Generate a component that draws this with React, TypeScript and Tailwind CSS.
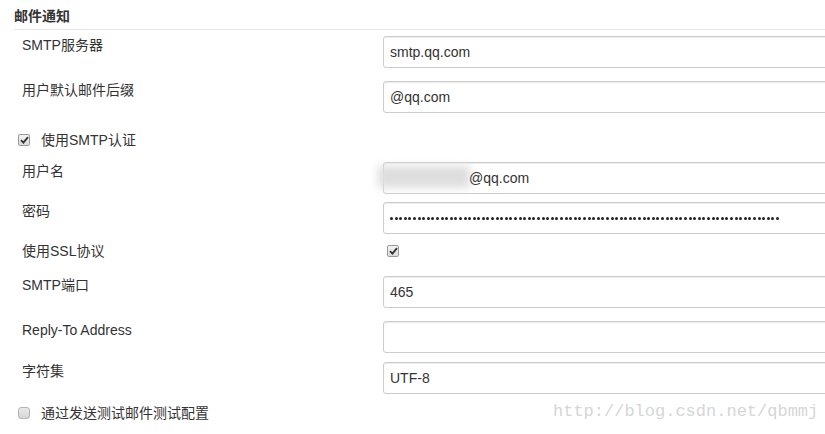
import type { ReactNode } from 'react';

const font = { fontFamily: '"Liberation Sans", Arial, "Noto Sans CJK SC", sans-serif' };

function Field({ children, className = '' }: { children?: ReactNode; className?: string }) {
  return (
    <div
      className={`relative flex h-[32px] w-[460px] shrink-0 items-center rounded-[3px] border border-[#cccccc] bg-white pl-[6px] text-[14px] text-[#333] shadow-[inset_0_1px_1px_rgba(0,0,0,0.075)] ${className}`}
    >
      {children}
    </div>
  );
}

function Row({ label, children, className = '' }: { label: string; children: ReactNode; className?: string }) {
  return (
    <div className={`flex items-start pl-[22px] ${className}`}>
      <div className="w-[361px] shrink-0 text-[14px] leading-[18px] text-[#333]">{label}</div>
      {children}
    </div>
  );
}

function Check({ checked }: { checked?: boolean }) {
  if (!checked) {
    return (
      <span className="block h-[12px] w-[12px] shrink-0 rounded-[3px] border border-[#b5b5b5] bg-gradient-to-b from-[#e9e9e9] to-[#d6d6d6]" />
    );
  }
  return (
    <span className="flex h-[12px] w-[12px] shrink-0 items-center justify-center rounded-[2px] border border-[#9a9a9a] bg-gradient-to-b from-[#f4f4f4] to-[#dcdcdc]">
      <svg width="9" height="8" viewBox="0 0 9 8">
        <path d="M1 4.2 L3.4 6.6 L8 1.2" fill="none" stroke="#333" strokeWidth="1.8" />
      </svg>
    </span>
  );
}

export default function App() {
  const dots = Array.from({ length: 85 });
  return (
    <div className="relative h-[434px] w-full overflow-hidden bg-white" style={font}>
      {/* section header */}
      <div className="ml-[14px] h-[30px] border-b border-[#e5e5e5] pt-[6px] text-[14px] font-bold leading-[20px] text-[#333]">
        邮件通知
      </div>

      <Row label="SMTP服务器" className="mt-[6px]">
        <Field>smtp.qq.com</Field>
      </Row>
      <Row label="用户默认邮件后缀" className="mt-[13px]">
        <Field>@qq.com</Field>
      </Row>

      <div className="mt-[19px] flex h-[16px] items-center pl-[18px] text-[14px] text-[#333]">
        <Check checked />
        <span className="ml-[11px]">使用SMTP认证</span>
      </div>

      <Row label="用户名" className="mt-[14px]">
        <Field className="pl-[85px]">
          <span className="absolute left-[-6px] top-[3px] h-[22px] w-[92px] bg-[#dedede] blur-[4px]" />
          <span className="relative">@qq.com</span>
        </Field>
      </Row>
      <Row label="密码" className="mt-[8px]">
        <Field>
          <div className="flex gap-[1.6px]">
            {dots.map((_, i) => (
              <span key={i} className="block h-[3px] w-[3px] rounded-full bg-[#222]" />
            ))}
          </div>
        </Field>
      </Row>

      <div className="mt-[8px] flex h-[18px] items-center pl-[22px]">
        <div className="w-[365px] shrink-0 text-[14px] leading-[18px] text-[#333]">使用SSL协议</div>
        <Check checked />
      </div>

      <Row label="SMTP端口" className="mt-[16px]">
        <Field>465</Field>
      </Row>
      <Row label="Reply-To Address" className="mt-[13px]">
        <Field />
      </Row>
      <Row label="字符集" className="mt-[9px]">
        <Field>UTF-8</Field>
      </Row>

      <div className="mt-[10px] flex h-[18px] items-center pl-[18px] text-[14px] text-[#333]">
        <Check />
        <span className="ml-[11px]">通过发送测试邮件测试配置</span>
      </div>

      {/* watermark */}
      <div
        className="absolute left-[553px] top-[402px] text-[17px] leading-[20px] text-[#d6d6d6]"
        style={{ fontFamily: '"Liberation Mono", "Courier New", monospace' }}
      >
        http://blog.csdn.net/qbmmj
      </div>
    </div>
  );
}
